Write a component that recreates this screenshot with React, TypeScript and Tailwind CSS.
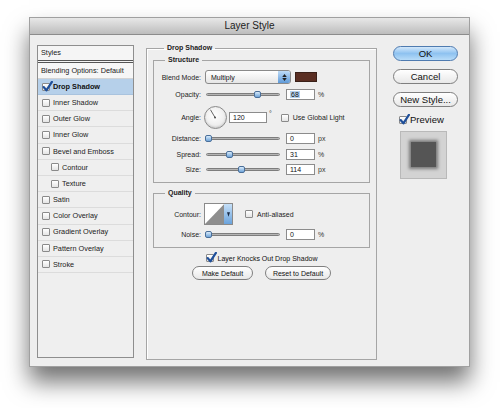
import React from "react";

const font = { fontFamily: '"Liberation Sans", Arial, sans-serif' };

function Check({ on = false }: { on?: boolean }) {
  return (
    <span className="relative inline-block h-[8px] w-[8px] shrink-0 rounded-[1px] border border-[#8a8a8a] bg-gradient-to-b from-white to-[#e4e4e4]">
      {on && (
        <svg viewBox="0 0 10 10" className="absolute -left-[1px] -top-[3px] h-[11px] w-[11px]">
          <path d="M1.5 5.5 L4 8.5 L9 0.8" fill="none" stroke="#1f4f9a" strokeWidth="2" strokeLinecap="round" strokeLinejoin="round" />
        </svg>
      )}
    </span>
  );
}

function Slider({ pos }: { pos: number }) {
  return (
    <div className="relative h-[9px] w-[74px]">
      <div className="absolute left-0 right-0 top-[3px] h-[3px] rounded-full border border-[#7d7d7d] bg-gradient-to-b from-[#9b9b9b] to-[#cfcfcf]" />
      <div
        className="absolute top-[1px] h-[7px] w-[7px] rounded-[2px] border border-[#4a6f9a] bg-gradient-to-b from-[#d8ebfb] to-[#6fa4d8]"
        style={{ left: pos - 3 }}
      />
    </div>
  );
}

function Field({ value, w = 29, sel = false }: { value: string; w?: number; sel?: boolean }) {
  return (
    <div
      className="flex h-[11px] items-center border border-[#8c8c8c] bg-white pl-[3px] text-[7px] leading-none text-[#111]"
      style={{ width: w }}
    >
      {sel ? <span className="bg-[#b4d2f0] px-[1px]">{value}</span> : value}
    </div>
  );
}

function Label({ children }: { children: React.ReactNode }) {
  return <div className="w-[47px] shrink-0 text-right text-[7px] leading-none text-[#1d1d1d]">{children}</div>;
}

function SliderRow({ label, pos, value, unit, sel, mt }: { label: string; pos: number; value: string; unit: string; sel?: boolean; mt: string }) {
  return (
    <div className={`flex h-[11px] items-center ${mt}`}>
      <Label>{label}</Label>
      <div className="ml-[5px]">
        <Slider pos={pos} />
      </div>
      <div className="ml-[6px]">
        <Field value={value} sel={sel} />
      </div>
      <span className="ml-[3px] text-[7px] leading-none text-[#333]">{unit}</span>
    </div>
  );
}

function Pill({ children, w, blue = false, size = "text-[9.5px]", h = "h-[15px]" }: { children: React.ReactNode; w: number; blue?: boolean; size?: string; h?: string }) {
  return (
    <div
      className={`flex ${h} items-center justify-center rounded-full border ${
        blue ? "border-[#4f7bb0] bg-gradient-to-b from-[#d3e8fb] via-[#8ec2f0] to-[#b8dcf8]" : "border-[#7f7f7f] bg-gradient-to-b from-white to-[#e8e8e8]"
      } ${size} leading-none text-[#111]`}
      style={{ width: w }}
    >
      {children}
    </div>
  );
}

const styleItems: { name: string; indent?: boolean }[] = [
  { name: "Inner Shadow" },
  { name: "Outer Glow" },
  { name: "Inner Glow" },
  { name: "Bevel and Emboss" },
  { name: "Contour", indent: true },
  { name: "Texture", indent: true },
  { name: "Satin" },
  { name: "Color Overlay" },
  { name: "Gradient Overlay" },
  { name: "Pattern Overlay" },
  { name: "Stroke" },
];

export default function App() {
  return (
    <div className="h-[408px] w-[500px] overflow-hidden bg-white pl-[29px] pt-[17px]" style={font}>
      <div className="h-[350px] w-[441px] border border-[#a0a0a0] bg-[#eeeeee] shadow-[0_15px_22px_rgba(0,0,0,0.55)]">
        {/* title bar */}
        <div className="flex h-[17px] items-center justify-center border-b border-[#8c8c8c] bg-gradient-to-b from-[#e8e8e8] to-[#bdbdbd] text-[10px] leading-none text-[#222]">
          Layer Style
        </div>

        <div className="flex items-start pl-[7px]">
          {/* styles list */}
          <div className="mt-[10px] flex h-[313px] w-[97px] flex-col border border-[#8e8e8e] bg-[#efefef]">
            <div className="flex h-[17px] items-center border-b-[3px] border-double border-[#555] bg-[#f5f5f5] pl-[3px] text-[7.3px] leading-none text-[#222]">
              Styles
            </div>
            <div className="flex h-[16px] items-center border-b border-[#d4d4d4] bg-[#f6f6f6] pl-[3px] text-[7.3px] leading-none text-[#222]">
              Blending Options: Default
            </div>
            <div className="flex h-[16px] items-center gap-[3px] border-b border-[#a9c3de] bg-[#b6d0ea] pl-[4px] text-[7.3px] font-bold leading-none text-[#111]">
              <Check on />
              Drop Shadow
            </div>
            {styleItems.map((it) => (
              <div
                key={it.name}
                className={`flex h-[16.2px] items-center gap-[3px] border-b border-[#dcdcdc] ${it.indent ? "pl-[13px]" : "pl-[4px]"} text-[7.3px] leading-none text-[#222]`}
              >
                <Check />
                {it.name}
              </div>
            ))}
          </div>

          {/* main panel */}
          <fieldset className="ml-[12px] mt-[8px] h-[317px] w-[231px] border border-[#a5a5a5] px-[6px] pb-0 shadow-[inset_1px_1px_0_#fff]">
            <legend className="ml-[11px] px-[3px] text-[7px] font-bold leading-[10px] text-[#222]">Drop Shadow</legend>

            <fieldset className="mt-[2px] h-[128px] border border-[#a5a5a5] px-0">
              <legend className="ml-[11px] px-[3px] text-[7px] font-bold leading-[10px] text-[#222]">Structure</legend>
              <div className="mt-[5px] flex h-[14px] items-center">
                <Label>Blend Mode:</Label>
                <div className="ml-[4px] flex h-[14px] w-[86px] items-center justify-between rounded-[3px] border border-[#8a8a8a] bg-gradient-to-b from-white to-[#e6e6e6] pl-[5px] text-[7px] leading-none text-[#111]">
                  Multiply
                  <div className="flex h-full w-[12px] flex-col items-center justify-center gap-[1px] rounded-r-[2px] bg-gradient-to-b from-[#bfdcf7] to-[#5e9ad8]">
                    <svg viewBox="0 0 6 4" className="h-[3px] w-[5px]"><path d="M0 4 L3 0 L6 4Z" fill="#222" /></svg>
                    <svg viewBox="0 0 6 4" className="h-[3px] w-[5px]"><path d="M0 0 L3 4 L6 0Z" fill="#222" /></svg>
                  </div>
                </div>
                <div className="ml-[4px] h-[10px] w-[22px] border border-[#3a2018] bg-[#5a2e22]" />
              </div>
              <SliderRow label="Opacity:" pos={51} value="68" unit="%" sel mt="mt-[5px]" />
              <div className="mt-[5px] flex h-[25px] items-center">
                <Label>Angle:</Label>
                <div className="relative ml-[3px] h-[23px] w-[23px] rounded-full border border-[#8a8a8a] bg-[radial-gradient(circle_at_45%_40%,#ffffff,#e2e2e2)] shadow-[inset_0_-1px_2px_rgba(0,0,0,0.15)]">
                  <svg viewBox="0 0 23 23" className="absolute inset-0 h-full w-full">
                    <line x1="11" y1="11.5" x2="6" y2="3" stroke="#444" strokeWidth="0.9" />
                    <circle cx="11" cy="11.5" r="1" fill="#444" />
                  </svg>
                </div>
                <div className="ml-[2px]">
                  <Field value="120" w={38} />
                </div>
                <span className="ml-[2px] self-start pt-[5px] text-[7px] leading-none text-[#333]">°</span>
                <div className="ml-[9px] flex items-center gap-[4px] text-[7px] leading-none text-[#222]">
                  <Check />
                  Use Global Light
                </div>
              </div>
              <SliderRow label="Distance:" pos={2} value="0" unit="px" mt="mt-[3px]" />
              <SliderRow label="Spread:" pos={23} value="31" unit="%" mt="mt-[5px]" />
              <SliderRow label="Size:" pos={35} value="114" unit="px" mt="mt-[4px]" />
            </fieldset>

            <fieldset className="mt-[5px] h-[60px] border border-[#a5a5a5] px-0">
              <legend className="ml-[11px] px-[3px] text-[7px] font-bold leading-[10px] text-[#222]">Quality</legend>
              <div className="mt-[5px] flex h-[22px] items-center">
                <Label>Contour:</Label>
                <div className="ml-[3px] flex h-[22px] w-[29px] border border-[#8a8a8a] bg-white">
                  <svg viewBox="0 0 20 20" preserveAspectRatio="none" className="h-full w-[20px]">
                    <path d="M0 20 L20 0 L20 20Z" fill="#8e8e8e" />
                  </svg>
                  <div className="flex w-[8px] items-center justify-center bg-gradient-to-b from-[#c6e0f8] to-[#6aa3dc]">
                    <svg viewBox="0 0 4 6" className="h-[5px] w-[3px]"><path d="M0 0 H4 L2 6Z" fill="#1a2a44" /></svg>
                  </div>
                </div>
                <div className="ml-[12px] flex items-center gap-[4px] text-[7px] leading-none text-[#222]">
                  <Check />
                  Anti-aliased
                </div>
              </div>
              <SliderRow label="Noise:" pos={2} value="0" unit="%" mt="mt-[4px]" />
            </fieldset>

            <div className="mt-[5px] flex h-[10px] items-center justify-center gap-[4px] text-[7px] leading-none text-[#111]">
              <Check on />
              Layer Knocks Out Drop Shadow
            </div>
            <div className="mt-[3px] flex justify-center gap-[12px]">
              <Pill w={61} size="text-[7px]" h="h-[14px]">Make Default</Pill>
              <Pill w={66} size="text-[7px]" h="h-[14px]">Reset to Default</Pill>
            </div>
          </fieldset>

          {/* right column */}
          <div className="ml-[16px] mt-[11px] flex flex-col">
            <Pill w={65} blue>OK</Pill>
            <div className="mt-[8px]">
              <Pill w={65}>Cancel</Pill>
            </div>
            <div className="mt-[8px]">
              <Pill w={65}>New Style...</Pill>
            </div>
            <div className="ml-[6px] mt-[8px] flex items-center gap-[3px] text-[9.5px] leading-none text-[#111]">
              <Check on />
              Preview
            </div>
            <div className="ml-[7px] mt-[6px] flex h-[48px] w-[47px] items-center justify-center border border-[#b9b9b9] bg-[#d3d3d3]">
              <div className="h-[25px] w-[25px] bg-[#555] shadow-[0_0_3px_2px_rgba(60,60,60,0.6)]" />
            </div>
          </div>
        </div>
      </div>
    </div>
  );
}
